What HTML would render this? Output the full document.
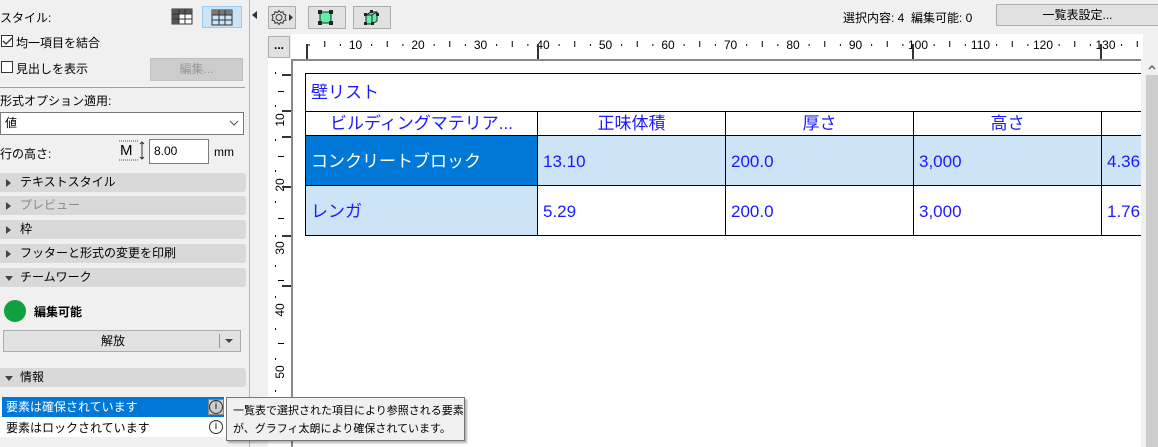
<!DOCTYPE html>
<html><head><meta charset="utf-8"><style>
*{box-sizing:border-box;margin:0;padding:0}
html,body{width:1158px;height:447px;overflow:hidden}
body{background:#f0f0f0;font-family:"Liberation Sans","Noto Sans CJK JP",sans-serif;font-size:12px;color:#000;position:relative}
.a{position:absolute}
.sec{position:absolute;left:0;width:246px;height:19px;background:#d9d9d9;border-radius:0 3px 3px 0;line-height:19px;padding-left:20px;font-size:12px}
.sec:before{content:"";position:absolute;left:6px;top:6px;border-left:5px solid #444;border-top:4px solid transparent;border-bottom:4px solid transparent}
.sec.o:before{left:5px;top:8px;border-top:5px solid #444;border-left:4px solid transparent;border-right:4px solid transparent;border-bottom:0}
.btn{position:absolute;background:#e1e1e1;border:1px solid #adadad}
.cell{position:absolute;border-right:1px solid #000;color:#1a1aff;font-size:17px;line-height:1;white-space:nowrap}
</style></head><body>
<div class="a" style="left:0;top:9px">スタイル:</div>
<svg class="a" style="top:8px;left:171px" width="22" height="17"><rect x="1" y="1" width="20" height="15" fill="#fff" stroke="#333"/><rect x="1" y="1" width="7" height="15" fill="#555"/><rect x="1" y="1" width="20" height="5" fill="#555"/><path d="M8 1V16M14 1V16M1 6H21M1 11H21" stroke="#333"/></svg>
<div class="a" style="left:202px;top:6px;width:40px;height:22px;background:#cce4f7;border:1px solid #99c9ef"></div>
<svg class="a" style="left:211px;top:9px" width="22" height="17"><rect x="1" y="1" width="20" height="15" fill="#cce4f7" stroke="#333"/><rect x="1" y="1" width="20" height="5" fill="#777"/><path d="M8 1V16M14 1V16M1 6H21M1 11H21" stroke="#333"/></svg>
<div class="a" style="left:1px;top:35px;width:12px;height:12px;border:1px solid #333;background:#fff"></div>
<svg class="a" style="left:2px;top:36px" width="11" height="11"><path d="M1 5L4 8L10 2" stroke="#333" stroke-width="1.3" fill="none"/></svg>
<div class="a" style="left:16px;top:34px">均一項目を結合</div>
<div class="a" style="left:1px;top:61px;width:12px;height:12px;border:1px solid #333;background:#fff"></div>
<div class="a" style="left:16px;top:60px">見出しを表示</div>
<div class="btn" style="left:150px;top:58px;width:93px;height:23px;background:#cccccc;border-color:#bfbfbf;color:#999;text-align:center;line-height:21px">編集...</div>
<div class="a" style="left:0;top:87px;width:245px;height:1px;background:#a0a0a0"></div>
<div class="a" style="left:0;top:92px">形式オプション適用:</div>
<div class="a" style="left:0;top:112px;width:244px;height:23px;background:#fff;border:1px solid #7a7a7a;padding-left:4px;line-height:21px">値</div>
<svg class="a" style="left:229px;top:119px" width="10" height="8"><path d="M1 2L5 6L9 2" stroke="#555" fill="none"/></svg>
<div class="a" style="left:0;top:145px">行の高さ:</div>
<div class="a" style="left:120px;top:143px;font-size:15px;line-height:1">M</div>
<svg class="a" style="left:118px;top:140px" width="30" height="22"><path d="M1 1H20M1 20H20" stroke="#555" stroke-dasharray="1,1"/><path d="M24 2V19M22 4L24 2L26 4M22 17L24 19L26 17" stroke="#333" fill="none"/></svg>
<div class="a" style="left:149px;top:139px;width:60px;height:25px;background:#fff;border:1px solid #7a7a7a;padding-left:4px;line-height:23px">8.00</div>
<div class="a" style="left:214px;top:145px">mm</div>
<div class="sec" style="top:173px">テキストスタイル</div>
<div class="sec" style="top:196px;color:#888">プレビュー</div>
<div class="sec" style="top:220px">枠</div>
<div class="sec" style="top:244px">フッターと形式の変更を印刷</div>
<div class="sec o" style="top:268px">チームワーク</div>
<div class="a" style="left:4px;top:300px;width:22px;height:22px;border-radius:50%;background:#10a040"></div>
<div class="a" style="left:34px;top:303px;font-weight:bold">編集可能</div>
<div class="btn" style="left:3px;top:330px;width:238px;height:22px;text-align:center;line-height:20px;padding-right:18px">解放</div>
<div class="a" style="left:219px;top:334px;width:1px;height:14px;background:#999"></div>
<svg class="a" style="left:224px;top:338px" width="10" height="6"><path d="M1 1H9L5 5Z" fill="#444"/></svg>
<div class="sec o" style="top:368px">情報</div>
<div class="a" style="left:0;top:397px;width:226px;height:40px;background:#fff"></div>
<div class="a" style="left:2px;top:397px;width:222px;height:20px;background:#0078d7;color:#fff;padding-left:4px;line-height:20px">要素は確保されています</div>
<div class="a" style="left:2px;top:418px;padding-left:4px;line-height:20px">要素はロックされています</div>
<div class="a" style="left:208px;top:399px;width:16px;height:16px;background:#ccc;border:1px solid #888"></div>
<div class="a" style="left:209px;top:400px;width:14px;height:14px;border:1px solid #333;border-radius:50%;text-align:center;font-size:10px;line-height:12px">i</div>
<div class="a" style="left:209px;top:420px;width:14px;height:14px;border:1px solid #333;border-radius:50%;text-align:center;font-size:10px;line-height:12px;background:#fff">i</div>
<div class="a" style="left:249px;top:0;width:1px;height:447px;background:#b5b5b5"></div>
<svg class="a" style="left:252px;top:11px" width="6" height="8"><path d="M5 0V8L0 4Z" fill="#333"/></svg>
<div class="btn" style="left:268px;top:6px;width:28px;height:23px"></div>
<svg class="a" style="left:270px;top:9px" width="26" height="18"><circle cx="9" cy="8.5" r="3" fill="none" stroke="#333"/><path d="M9 1.5L10.5 3.5L13 2.8L13.5 5.2L16 6L15 8.5L16 11L13.5 11.8L13 14.2L10.5 13.5L9 15.5L7.5 13.5L5 14.2L4.5 11.8L2 11L3 8.5L2 6L4.5 5.2L5 2.8L7.5 3.5Z" fill="none" stroke="#333"/><path d="M19 5V12L23 8.5Z" fill="#333"/></svg>
<div class="btn" style="left:308px;top:6px;width:38px;height:23px"></div>
<svg class="a" style="left:318px;top:10px" width="16" height="16"><rect x="2" y="2" width="11" height="11" fill="#5ef0a8" stroke="#222"/><rect x="0" y="0" width="4" height="4" fill="#222"/><rect x="11" y="0" width="4" height="4" fill="#222"/><rect x="0" y="11" width="4" height="4" fill="#222"/><rect x="11" y="11" width="4" height="4" fill="#222"/></svg>
<div class="btn" style="left:353px;top:6px;width:38px;height:23px"></div>
<svg class="a" style="left:363px;top:9px" width="18" height="18"><path d="M3 6L8 3L14 3L14 12L9 15L3 15Z" fill="#5ef0a8" stroke="#222"/><path d="M3 6L9 6L14 3M9 6V15" stroke="#222" fill="none"/><rect x="1" y="4" width="3" height="3" fill="#222"/><rect x="7" y="1" width="3" height="3" fill="#222"/><rect x="13" y="4" width="3" height="3" fill="#222"/><rect x="8" y="13" width="3" height="3" fill="#222"/><rect x="1" y="13" width="3" height="3" fill="#222"/></svg>
<div class="a" style="left:843px;top:9px">選択内容: 4&nbsp; 編集可能: 0</div>
<div class="btn" style="left:996px;top:4px;width:162px;height:22px;text-align:center;line-height:20px;border-right:none">一覧表設定...</div>
<div class="btn" style="left:268px;top:36px;width:22px;height:22px;text-align:center;line-height:16px;font-weight:bold">...</div>
<div class="a" style="left:291px;top:34px;width:852px;height:26px;background:#fff"></div>
<div class="a" style="left:268px;top:58px;width:24px;height:389px;background:#fff"></div>
<svg class="a" style="left:291px;top:34px" width="852" height="26" id="hr"></svg>
<svg class="a" style="left:268px;top:58px" width="24" height="389" id="vr"></svg>
<div class="a" style="left:291px;top:59px;width:850px;height:388px;background:#fff;border-left:2px solid #888;border-top:2px solid #888"></div>
<div class="a" style="left:1141px;top:59px;width:17px;height:388px;background:#f0f0f0"></div>
<div class="a" style="left:1146px;top:75px;width:12px;height:372px;background:#cdcdcd"></div>
<svg class="a" style="left:1148px;top:64px" width="8" height="6"><path d="M1 5L4 2L7 5" stroke="#555" fill="none" stroke-width="1.3"/></svg>
<div class="a" style="left:305px;top:73px;width:836px;height:163px;border:1px solid #000;border-right:none;overflow:hidden">
 <div class="cell" style="left:5px;top:10px;border:none">壁リスト</div>
 <div class="a" style="left:0;top:37px;width:836px;height:1px;background:#000"></div>
 <div class="cell" style="left:0;top:38px;width:232px;height:24px;text-align:center;padding-top:3px">ビルディングマテリア...</div>
 <div class="cell" style="left:232px;top:38px;width:188px;height:24px;text-align:center;padding-top:3px">正味体積</div>
 <div class="cell" style="left:420px;top:38px;width:188px;height:24px;text-align:center;padding-top:3px">厚さ</div>
 <div class="cell" style="left:608px;top:38px;width:188px;height:24px;text-align:center;padding-top:3px">高さ</div>
 <div class="a" style="left:0;top:61px;width:836px;height:1px;background:#000"></div>
 <div class="cell" style="left:0;top:62px;width:232px;height:49px;background:#0078d7;color:#fff;padding:17px 0 0 5px">コンクリートブロック</div>
 <div class="cell" style="left:232px;top:62px;width:188px;height:49px;background:#cde3f6;padding:17px 0 0 5px">13.10</div>
 <div class="cell" style="left:420px;top:62px;width:188px;height:49px;background:#cde3f6;padding:17px 0 0 5px">200.0</div>
 <div class="cell" style="left:608px;top:62px;width:188px;height:49px;background:#cde3f6;padding:17px 0 0 5px">3,000</div>
 <div class="cell" style="left:796px;top:62px;width:60px;height:49px;background:#cde3f6;padding:17px 0 0 5px">4.36</div>
 <div class="a" style="left:0;top:111px;width:836px;height:1px;background:#000"></div>
 <div class="cell" style="left:0;top:112px;width:232px;height:50px;background:#cde3f6;padding:17px 0 0 5px">レンガ</div>
 <div class="cell" style="left:232px;top:112px;width:188px;height:50px;padding:17px 0 0 5px">5.29</div>
 <div class="cell" style="left:420px;top:112px;width:188px;height:50px;padding:17px 0 0 5px">200.0</div>
 <div class="cell" style="left:608px;top:112px;width:188px;height:50px;padding:17px 0 0 5px">3,000</div>
 <div class="cell" style="left:796px;top:112px;width:60px;height:50px;padding:17px 0 0 5px">1.76</div>
</div>
<div class="a" style="left:226px;top:397px;width:239px;height:44px;background:#f0f0f0;border:1px solid #767676;box-shadow:2px 2px 2px rgba(0,0,0,.3);padding:4px 0 0 6px;font-size:11px;line-height:18px;white-space:nowrap;overflow:hidden">一覧表で選択された項目により参照される要素<br>が、グラフィ太朗により確保されています。</div>
<script>
var h=document.getElementById("hr"),s="";
for(var u=0;u<=136;u+=2.5){var x=2+u*6.25;var k=Math.round(u*2)%20;
if(u%10==0&&u>0){s+='<text x="'+x+'" y="15" font-size="12" font-family="Liberation Sans" text-anchor="middle">'+u+'</text>';}
else if(k==5||k==15)s+='<rect x="'+x+'" y="10" width="1" height="2" fill="#000"/>';
else if(k==10)s+='<rect x="'+x+'" y="7" width="1" height="6" fill="#000"/>';}
s+='<rect x="15" y="10" width="2" height="16" fill="#333"/><rect x="246" y="10" width="2" height="16" fill="#333"/><rect x="621" y="10" width="2" height="16" fill="#333"/><rect x="809" y="10" width="2" height="16" fill="#333"/>';
h.innerHTML=s;
var v=document.getElementById("vr"),t="";
var ys={10:62,20:127,30:190,40:252,50:314};
for(var n in ys){var y=ys[n];t+='<text transform="translate(16,'+y+') rotate(-90)" font-size="12" font-family="Liberation Sans" text-anchor="middle">'+n+'</text>';}
[16,52,78,128,177,227].forEach(function(y){t+='<rect x="14" y="'+y+'" width="10" height="2" fill="#333"/>'});
[33,98,160,222,285,347].forEach(function(y){t+='<rect x="10" y="'+y+'" width="6" height="1" fill="#000"/>'});
[14,47,81,112,143,177,207,238,270,300,332,362].forEach(function(y){t+='<rect x="7" y="'+y+'" width="1" height="2" fill="#000"/>'});
v.innerHTML=t;
</script>
</body></html>
